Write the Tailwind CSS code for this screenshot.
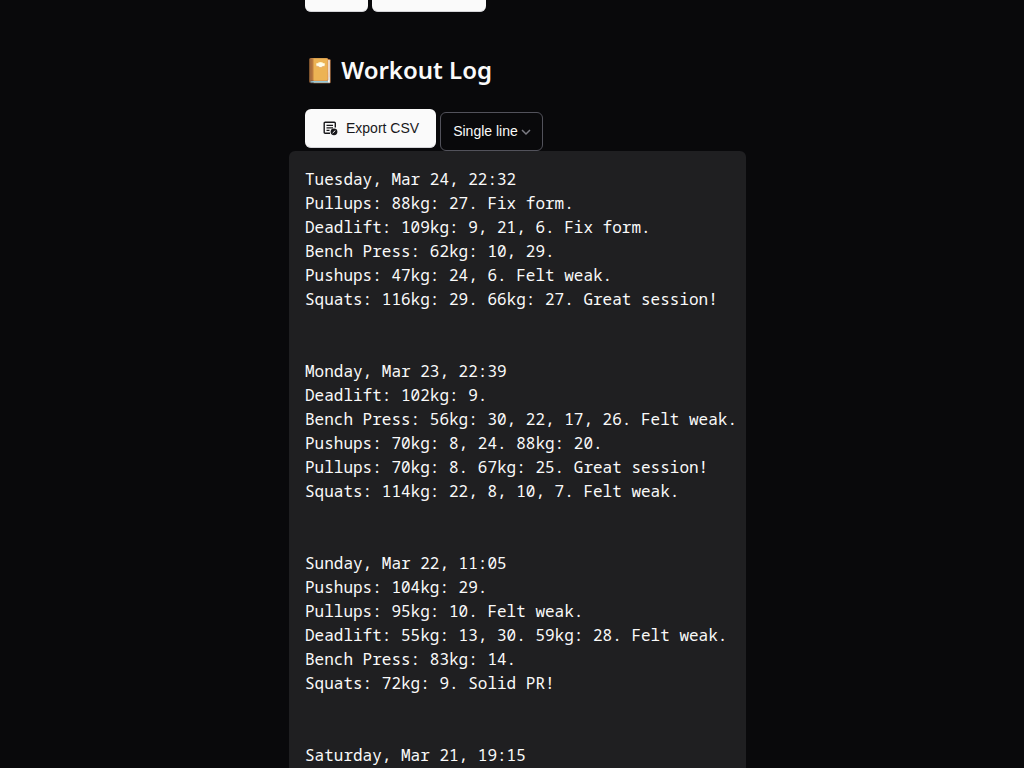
<!DOCTYPE html>
<html lang="en">
<head>
<meta charset="utf-8">
<meta name="viewport" content="width=device-width, initial-scale=1">
<title>Workout Log</title>
<script src="https://cdn.jsdelivr.net/npm/@tailwindcss/browser@4"></script>
</head>
<body class="bg-[#09090b] text-[#fafafa] font-['Noto_Sans',sans-serif]">
<main class="mx-auto flex min-h-screen w-full max-w-[468px] flex-col pl-[11px]">
  <div class="flex gap-1 px-4">
    <button type="button" aria-label="Save" class="h-3 w-[63px] rounded-b-md border-b border-zinc-300 bg-[#fafafa]"></button>
    <button type="button" aria-label="Add exercise" class="h-3 w-[114px] rounded-b-md border-b border-zinc-300 bg-[#fafafa]"></button>
  </div>
  <h2 class="mt-10 px-4 text-2xl leading-9 font-semibold">📔 Workout Log</h2>
  <div class="mt-[21px] flex items-start gap-1 px-4 font-['Liberation_Sans',sans-serif] text-sm">
    <button type="button" class="flex h-[39px] items-center gap-2 rounded-md border-b border-zinc-300 bg-[#fafafa] pr-[17px] pl-[18px] text-[#18181b]">
      <svg class="size-[15px]" viewBox="0 0 15 15" fill="none" stroke="currentColor" stroke-width="1.4" aria-hidden="true">
        <path d="M7 12.3H2.2Q1.2 12.3 1.2 11.3V2.3Q1.2 1.3 2.2 1.3H11.3Q12.3 1.3 12.3 2.3V6.5"/>
        <path d="M3.5 4.3H10M3.5 6.8H10M3.5 9.3H6.5" stroke-width="1.2"/>
        <circle cx="11" cy="10.8" r="3.4" fill="currentColor" stroke="none"/>
        <path d="M9.6 12.1L12.3 9.6" stroke="#fafafa" stroke-width="1"/>
      </svg>
      <span>Export CSV</span>
    </button>
    <div class="relative mt-[3px]">
      <select aria-label="Format" class="h-[39px] w-[103px] appearance-none rounded-md border border-[#52525b] bg-[#09090b] pr-6 pb-0.5 pl-3 text-sm">
        <option>Single line</option>
      </select>
      <svg class="pointer-events-none absolute top-4 right-3 h-2 w-2.5" viewBox="0 0 10 8" fill="none" stroke="#7c7c84" stroke-width="1.5" aria-hidden="true"><path d="M1 2L5 6L9 2"/></svg>
    </div>
  </div>
  <pre class="flex-1 rounded-t-md bg-[#1f1f21] px-4 pt-4 font-['Noto_Sans_Mono','Noto_Sans',monospace] text-base leading-6">Tuesday, Mar 24, 22:32
Pullups: 88kg: 27. Fix form.
Deadlift: 109kg: 9, 21, 6. Fix form.
Bench Press: 62kg: 10, 29.
Pushups: 47kg: 24, 6. Felt weak.
Squats: 116kg: 29. 66kg: 27. Great session!


Monday, Mar 23, 22:39
Deadlift: 102kg: 9.
Bench Press: 56kg: 30, 22, 17, 26. Felt weak.
Pushups: 70kg: 8, 24. 88kg: 20.
Pullups: 70kg: 8. 67kg: 25. Great session!
Squats: 114kg: 22, 8, 10, 7. Felt weak.


Sunday, Mar 22, 11:05
Pushups: 104kg: 29.
Pullups: 95kg: 10. Felt weak.
Deadlift: 55kg: 13, 30. 59kg: 28. Felt weak.
Bench Press: 83kg: 14.
Squats: 72kg: 9. Solid PR!


Saturday, Mar 21, 19:15</pre>
</main>
</body>
</html>
